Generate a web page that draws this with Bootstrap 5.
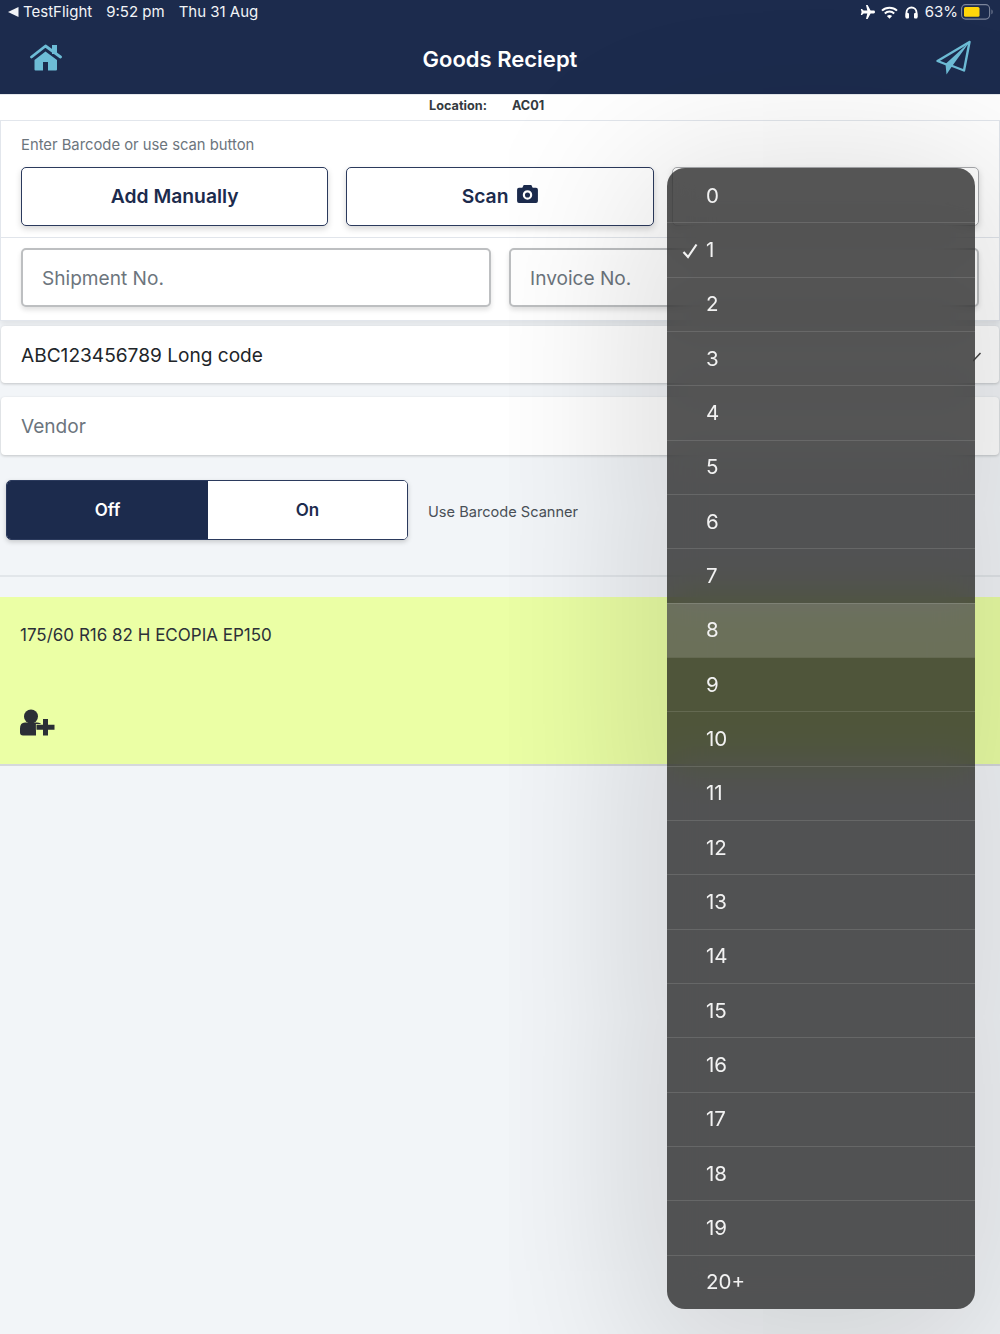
<!doctype html>
<html lang="en"><head><meta charset="utf-8"><title>Goods Reciept</title>
<link href="https://cdn.jsdelivr.net/npm/bootstrap@5.3.0/dist/css/bootstrap.min.css" rel="stylesheet">
<style>
html,body{height:100%}
body{background:#f2f5f8;font-family:Inter,"Liberation Sans",sans-serif;color:#212529;overflow:hidden;position:relative}
.app-head{background:#1c2b4d;height:94px;color:#fff}
.status-row{height:24px;font-size:15px;padding:0 6px 0 8px;line-height:24px;color:#f2f4f7}
.status-row .gap-a{margin-left:14px}
.ico-wifi{margin-left:6px}
.ico-phones{margin-left:7px}
.pct{margin-left:7px}
.ico-batt{margin-left:3px}
.nav-row{height:70px;padding:0 0 0 30px}
.app-title{font-size:22px;font-weight:600;position:absolute;left:0;right:0;text-align:center;margin:0;line-height:70px;top:24px}
.send-ico{margin-left:auto;margin-right:29px;margin-top:-3px}
.home-ico{margin-top:-3px}
.loc-row{height:26px;background:#fff;border-top:1px solid #e5e8ec;font-size:12.7px;font-weight:700;color:#343a40;line-height:22px;padding-left:429px}
.loc-row span+span{margin-left:25px}
.sect-a{background:#fff;border:1.5px solid #e2e6ec;height:118px;padding:15px 20px 0}
.hint{font-size:14.8px;color:#6c757d;line-height:18px;margin-bottom:13px}
.act-btn{flex:1;height:59px;background:#fff;border:1.5px solid #2b3a5d;border-radius:5px;color:#1c2b4d;font-size:19.3px;font-weight:600;box-shadow:0 3px 6px rgba(0,0,0,.16);padding:0}
.act-btn:hover{background:#fff;color:#1c2b4d;border-color:#2b3a5d}
.act-btn.faded{border-color:#a9abae}
.act-row{gap:18px}
.cam-ico{margin-left:4px}
.sect-b{background:#fff;height:83px;padding:10px 20px 0;border:1.5px solid #e2e6ec;border-top:0;box-shadow:0 4px 6px rgba(0,0,0,.07)}
.field-row{gap:18px}
.field{flex:1;height:59px;font-size:19.100px;padding:0 19px;border:2px solid #bdbfc1;border-radius:5px;box-shadow:0 3px 5px rgba(0,0,0,.12);color:#212529}
.field::placeholder{color:#6c757d;opacity:1}
.wide-field{display:flex;align-items:center;background:#fff;margin:0 1px;padding:0 20px;font-size:19.100px;border-radius:4px;box-shadow:0 1px 3px rgba(0,0,0,.2)}
.code-row{height:57px;margin-top:5px;padding-top:2px}
.vendor-row{height:58px;margin-top:14px;color:#6c757d}
.chev{position:absolute;right:18px;top:352px}
.toggle-row{margin-top:25px;padding-left:6px;height:60px}
.seg{width:402px;height:60px;border:1.5px solid #2b3a5d;border-radius:5px;overflow:hidden;box-shadow:0 2px 5px rgba(0,0,0,.18)}
.seg div{font-size:17px;font-weight:600;line-height:58px;text-align:center}
.seg .seg-off{width:201px;background:#1c2b4d;color:#fff}
.seg .seg-on{flex:1;background:#fff;color:#1c2b4d}
.scan-lbl{font-size:14.600px;color:#495057;margin-left:20px;padding-top:5px}
.sep{margin:35px 0 0;height:2px;background:#e2e6ea;opacity:1;border:0}
.item-band{margin-top:20px;height:169px;background:#ebffa5;border-bottom:2px solid #d6d9dc;padding:27px 20px 0;position:relative;font-size:17px;color:#2c3038;line-height:22px}
.item-ico{position:absolute;left:20px;top:112px;display:block}
.picker{position:absolute;left:667px;top:168px;width:308px;height:1141px;border-radius:18px;overflow:hidden;background:rgba(13,13,13,.7);-webkit-backdrop-filter:blur(20px);backdrop-filter:blur(20px);padding:1px 0 0;margin:0;z-index:5}
.picker-shadow{position:absolute;left:667px;top:168px;width:308px;height:1141px;border-radius:18px;box-shadow:0 30px 170px 30px rgba(0,0,0,.15);z-index:4}
.picker .list-group-item{background:transparent;color:#f2f2f2;border:0;border-top:1.5px solid rgba(255,255,255,.12);border-radius:0;flex:1;display:flex;align-items:center;padding:1px 0 0 39px;font-size:20.500px;position:relative;margin:0}
.picker .list-group-item:first-child{border-top:0}
.picker .list-group-item.now{background:rgba(255,255,255,.16)}
.tick{position:absolute;left:15px;top:20px}
</style></head>
<body>
<header class="app-head">
 <div class="status-row d-flex align-items-center">
  <svg width="11" height="10" viewBox="0 0 11 10" class="me-1"><path d="M10.500 0v10L0 5z" fill="#f2f4f7"/></svg>
  <span>TestFlight</span><span class="gap-a">9:52 pm</span><span class="gap-a">Thu 31 Aug</span>
  <div class="ms-auto d-flex align-items-center">
   <svg width="15" height="14" viewBox="0 0 15 14"><path d="M6 0h1.600l3 5.600h3c1 0 1.400.7 1.400 1.400s-.4 1.400-1.400 1.400h-3l-3 5.600H6l1.300-5.600H3.600L2 10H.8l.8-3-.8-3H2l1.600 1.600h3.700z" fill="#fff"/></svg>
   <svg width="17" height="13" viewBox="0 0 17 13" class="ico-wifi"><g fill="none" stroke="#fff" stroke-width="2"><path d="M1 4.600C5 .8 12 .8 16 4.600"/><path d="M3.800 7.400c2.600-2.400 6.800-2.400 9.400 0"/></g><path d="M8.500 12.800 5.900 10c1.500-1.200 3.700-1.200 5.200 0z" fill="#fff"/></svg>
   <svg width="13" height="13" viewBox="0 0 13 13" class="ico-phones"><path d="M1.500 11V6.500a5 5 0 0 1 10 0V11" fill="none" stroke="#fff" stroke-width="1.900"/><rect x=".5" y="7" width="3.500" height="5.500" rx="1" fill="#fff"/><rect x="9" y="7" width="3.500" height="5.500" rx="1" fill="#fff"/></svg>
   <span class="pct">63%</span>
   <svg width="33" height="16" viewBox="0 0 33 16" class="ico-batt"><rect x=".6" y=".6" width="28" height="14.500" rx="4" fill="none" stroke="#7c859b" stroke-width="1.100"/><rect x="3" y="3" width="15.500" height="9.800" rx="1.500" fill="#ffd60a"/><path d="M30.500 5.500c1.400.4 1.400 4.400 0 4.800z" fill="#7c859b"/></svg>
  </div>
 </div>
 <div class="nav-row d-flex align-items-center">
  <svg class="home-ico" width="32" height="27" viewBox="0 0 32 27"><path d="M22 1h5v9h-5z" fill="#6dbcd6"/><path d="M1.500 13 15.500 2l15 11" fill="none" stroke="#6dbcd6" stroke-width="2.800" stroke-linecap="round" stroke-linejoin="round"/><path d="M4.500 16 15.500 7.500 27 16v9.500q0 1-1 1h-8v-8.500h-5v8.500H5.500q-1 0-1-1z" fill="#6dbcd6"/></svg>
  <h1 class="app-title">Goods Reciept</h1>
  <svg class="send-ico" width="36" height="36" viewBox="0 0 36 36"><path d="M34.500 2 2.500 21l9 3.500M34.500 2l-5.500 28.500L16 25.500" fill="none" stroke="#6dbcd6" stroke-width="2.400" stroke-linejoin="round" stroke-linecap="round"/><path d="M34.500 2 10.500 24l1 10.500 5-7.500z" fill="#6dbcd6"/></svg>
 </div>
</header>
<div class="loc-row"><span>Location:</span><span>AC01</span></div>
<section class="sect-a">
 <div class="hint">Enter Barcode or use scan button</div>
 <div class="d-flex act-row">
  <button class="btn act-btn" type="button">Add Manually</button>
  <button class="btn act-btn" type="button">Scan
   <svg class="align-baseline cam-ico" width="21" height="18" viewBox="0 0 22 19"><path fill-rule="evenodd" d="M7 0h8l1.500 3H20q2 0 2 2v12q0 2-2 2H2q-2 0-2-2V5q0-2 2-2h3.500zM11 5.500a5 5 0 1 0 0 10 5 5 0 0 0 0-10zm0 2.300a2.700 2.700 0 1 1 0 5.400 2.700 2.700 0 0 1 0-5.400z" fill="#1c2b4d"/></svg>
  </button>
  <button class="btn act-btn faded" type="button" aria-label="Quantity"></button>
 </div>
</section>
<section class="sect-b d-flex field-row">
 <input class="form-control field" placeholder="Shipment No.">
 <input class="form-control field" placeholder="Invoice No.">
</section>
<div class="wide-field code-row">ABC123456789 Long code</div>
<svg class="chev" width="9" height="10" viewBox="0 0 9 10"><path d="M0 9 7.500 1" stroke="#444" stroke-width="1.500" fill="none"/></svg>
<div class="wide-field vendor-row">Vendor</div>
<div class="toggle-row d-flex align-items-center">
 <div class="seg d-flex"><div class="seg-off">Off</div><div class="seg-on">On</div></div>
 <div class="scan-lbl">Use Barcode Scanner</div>
</div>
<hr class="sep">
<div class="item-band">175/60 R16 82 H ECOPIA EP150
 <svg class="item-ico" width="35" height="27" viewBox="0 0 35 27"><circle cx="11" cy="7.500" r="7" fill="#2b2f36"/><path d="M5 13.500h12q4 0 5 3H19v4h-3v6H3q-3 0-3-3v-4q0-6 5-6z" fill="#2b2f36"/><path d="M23 10h5v5.700h6.500v5H28V26.500h-5v-5.800h-6.500v-5H23z" fill="#2b2f36" stroke="#ebffa5" stroke-width="1.200" paint-order="stroke"/></svg>
</div>
<div class="picker-shadow"></div>
<ul class="picker list-group d-flex flex-column">
 <li class="list-group-item">0</li>
 <li class="list-group-item"><svg class="tick" width="16" height="16" viewBox="0 0 16 16"><path d="M1.500 9 6 14 14.500 1.500" fill="none" stroke="#f2f2f2" stroke-width="2.200"/></svg>1</li>
 <li class="list-group-item">2</li><li class="list-group-item">3</li><li class="list-group-item">4</li>
 <li class="list-group-item">5</li><li class="list-group-item">6</li><li class="list-group-item">7</li>
 <li class="list-group-item now">8</li><li class="list-group-item">9</li><li class="list-group-item">10</li>
 <li class="list-group-item">11</li><li class="list-group-item">12</li><li class="list-group-item">13</li>
 <li class="list-group-item">14</li><li class="list-group-item">15</li><li class="list-group-item">16</li>
 <li class="list-group-item">17</li><li class="list-group-item">18</li><li class="list-group-item">19</li>
 <li class="list-group-item">20+</li>
</ul>
<script src="https://cdn.jsdelivr.net/npm/bootstrap@5.3.0/dist/js/bootstrap.bundle.min.js"></script>
</body></html>
